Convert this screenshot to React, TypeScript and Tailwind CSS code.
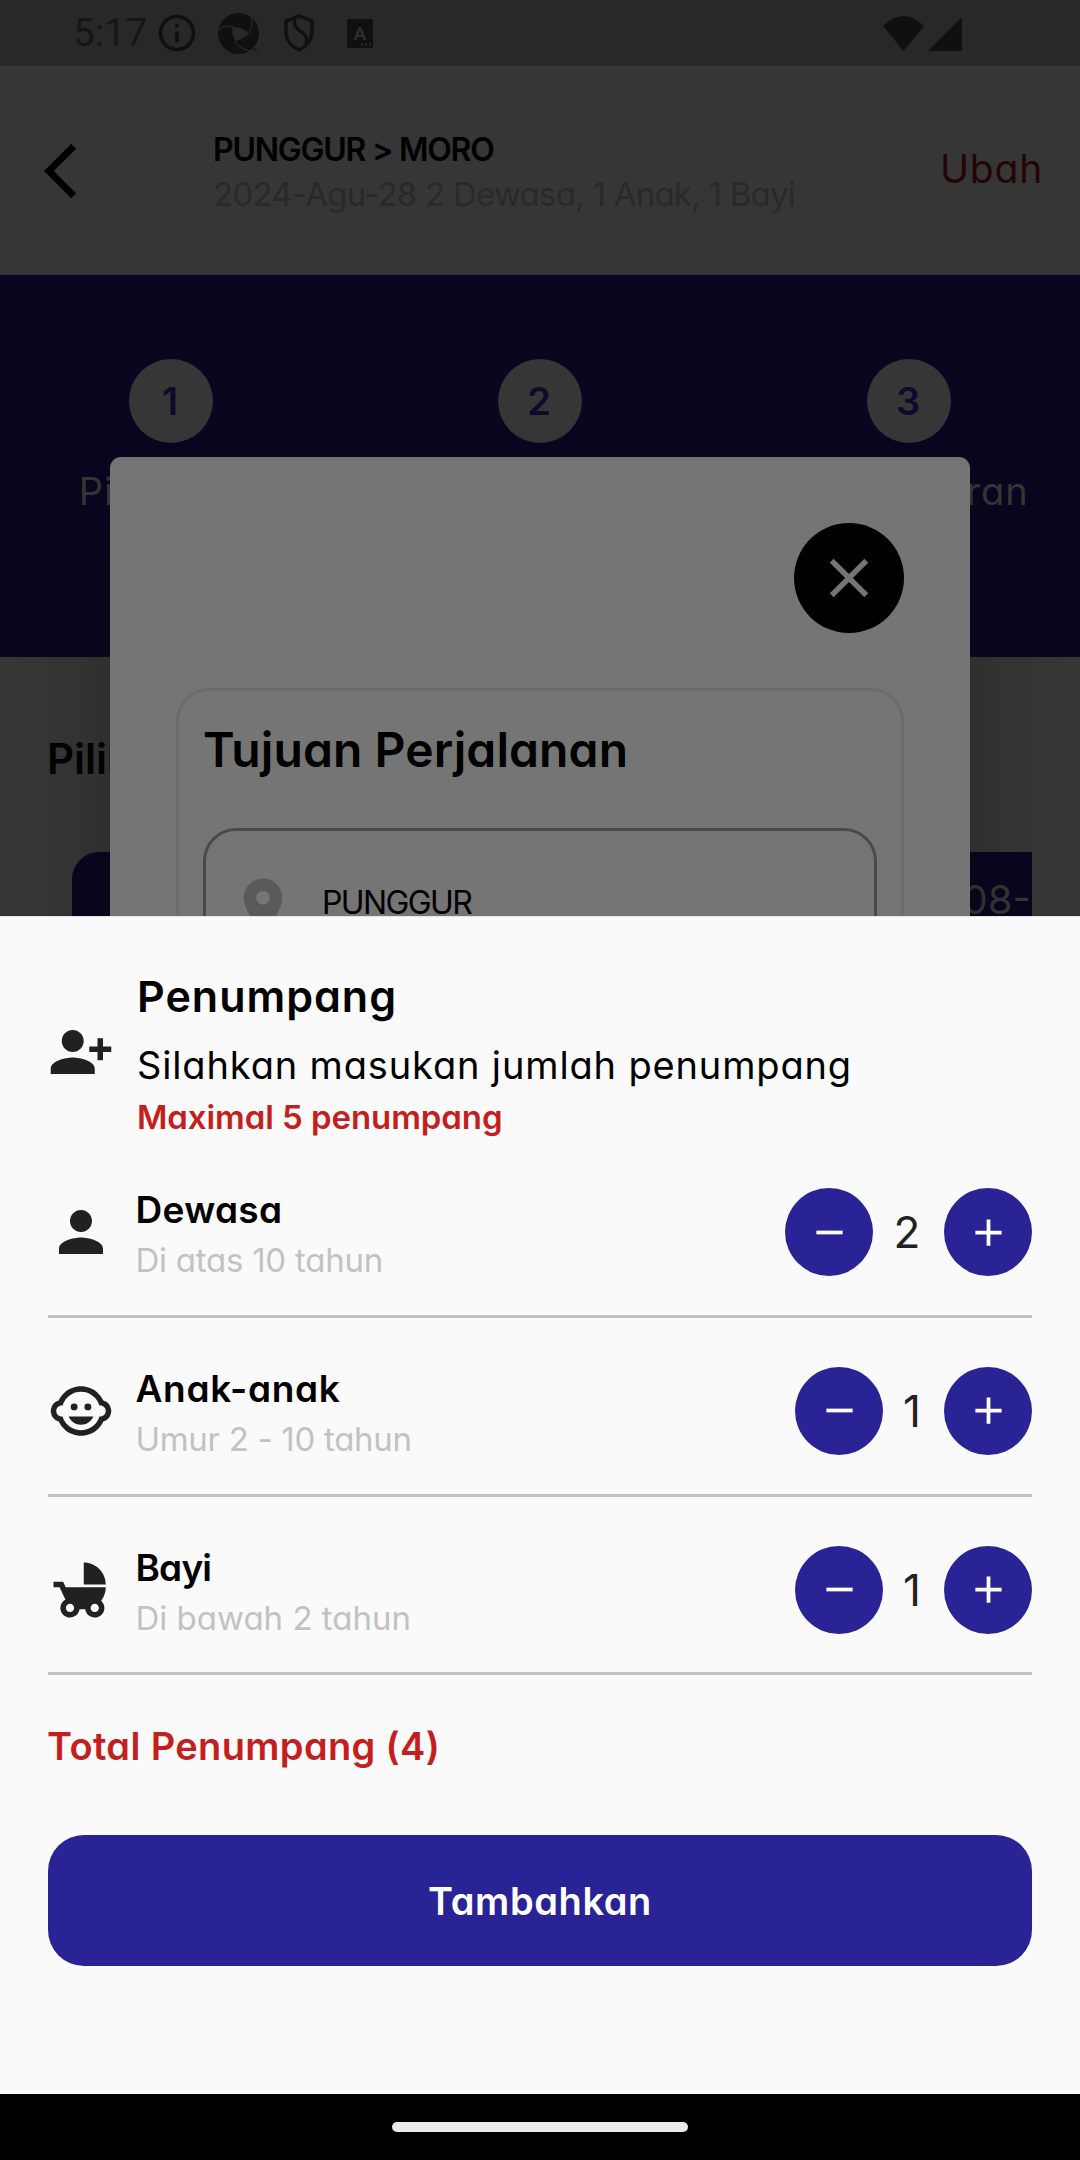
import type { ReactNode } from "react";
import {
  MdAdd,
  MdArrowBackIos,
  MdChildFriendly,
  MdClose,
  MdInfoOutline,
  MdLocationOn,
  MdOutlineChildCare,
  MdPerson,
  MdPersonAddAlt1,
  MdRemove,
} from "react-icons/md";

function ApertureIcon() {
  return (
    <svg viewBox="0 0 44 44" className="h-[44px] w-[44px]">
      <circle cx="21.5" cy="22.5" r="20.5" fill="#101010" />
      <path d="M15.5 16 Q24 15 32 22.500 Q27 28 18.5 30 Q14.500 23 15.500 16 Z" fill="#282828" />
      <path d="M1 19.500 Q7 14 16 15.500 M32.500 22 Q36 15 34 5 M17.500 30 Q22 38 33 40" fill="none" stroke="#282828" strokeWidth="1.300" />
      <path d="M36 38.500 h4" stroke="#101010" strokeWidth="1.500" />
    </svg>
  );
}

function ShieldIcon() {
  return (
    <svg viewBox="0 0 32 40" className="h-[40px] w-[32px]" fill="none" stroke="#101010" strokeWidth="3.400" strokeLinejoin="round">
      <path d="M16 3 L29 8 V19 C29 27 23.500 33.500 16 37 C8.500 33.500 3 27 3 19 V8 Z" />
      <path d="M11.500 5 V10 C11.500 18 23.500 18.500 23.500 26 V31" />
    </svg>
  );
}

function LetterTileIcon() {
  return (
    <svg viewBox="0 0 26 29" className="h-[29px] w-[26px]">
      <rect width="26" height="29" rx="2.500" fill="#101010" />
      <text x="13" y="20.500" textAnchor="middle" fontFamily="Roboto" fontWeight="700" fontSize="19" fill="#2d2d2d">
        A
      </text>
      <path d="M14 25.500h2M18 25.500h2M22 25.500h2" stroke="#2d2d2d" strokeWidth="2" />
    </svg>
  );
}

function StatusBar() {
  return (
    <div className="flex h-[66px] items-center bg-[#282828] pr-[118px] pl-[73px]">
      <span className="w-[82px] font-[Roboto] text-[38.500px] leading-[46px] whitespace-nowrap text-[#161616]">5:17</span>
      <MdInfoOutline className="h-[44px] w-[44px] text-[#101010]" />
      <span className="ml-[18px]"><ApertureIcon /></span>
      <span className="ml-[22px]"><ShieldIcon /></span>
      <span className="ml-[32px]"><LetterTileIcon /></span>
      <div className="ml-auto flex items-end gap-[4px]">
        <svg viewBox="0 0 41 35" className="h-[35px] w-[41px]">
          <path d="M0 10 Q20.500 -10 41 10 L20.500 35 Z" fill="#101010" />
        </svg>
        <svg viewBox="0 0 34 34" className="h-[34px] w-[34px]">
          <path d="M34 0 V34 H0 Z" fill="#101010" />
        </svg>
      </div>
    </div>
  );
}

function Header() {
  return (
    <div className="flex h-[209px] items-center bg-[#363636] pr-[37px] pl-[44px]">
      <MdArrowBackIos className="h-[66px] w-[66px] text-black" />
      <div className="mt-[2px] ml-[103px] leading-[45px] whitespace-nowrap">
        <div className="text-[32px] font-semibold tracking-[-1.25px] text-black">PUNGGUR &gt; MORO</div>
        <div className="text-[33px] tracking-[-0.75px] text-[#292929]">2024-Agu-28 2 Dewasa, 1 Anak, 1 Bayi</div>
      </div>
      <div className="mb-[4px] ml-auto text-[39px] leading-[46px] tracking-[0.8px] text-[#240404]">Ubah</div>
    </div>
  );
}

const steps = ["Pilih Tiket", "Data Diri", "Pembayaran"];

function Steps() {
  return (
    <div className="flex h-[382px] justify-between bg-[#09071f] px-[50px] pt-[84px]">
      {steps.map((label, i) => (
        <div key={label} className="flex w-[242px] flex-col items-center">
          <div className="flex h-[84px] w-[84px] items-center justify-center rounded-full bg-[#363636] pr-[2px] text-[38px] font-semibold text-[#0d0a2d]">
            {i + 1}
          </div>
          <div className="mt-[25px] text-[38px] leading-[46px] tracking-[1px] whitespace-nowrap text-[#363636]">{label}</div>
        </div>
      ))}
    </div>
  );
}

function BookingPage() {
  return (
    <div>
      <StatusBar />
      <Header />
      <Steps />
      <div className="pr-[48px] pl-[47px]">
        <div className="mt-[77px] text-[42px] leading-[50px] font-semibold text-black">Pilih</div>
        <div className="mt-[68px] ml-[25px] flex h-[140px] justify-end rounded-tl-[27px] bg-[#09071f] pt-[24px] pr-[1px] text-[40px] leading-[48px] text-[#363636]">
          08-
        </div>
      </div>
    </div>
  );
}

function TripDialog() {
  return (
    <div className="absolute top-[457px] left-[110px] flex h-[600px] w-[860px] flex-col rounded-[11px] bg-[#757575] p-[66px] shadow-[0_66px_84px_8px_rgba(0,0,0,0.22)]">
      <button className="flex h-[110px] w-[110px] shrink-0 items-center justify-center self-end rounded-full bg-black">
        <MdClose className="h-[66px] w-[66px] text-[#757575]" />
      </button>
      <div className="mt-[55px] h-[400px] shrink-0 rounded-t-[33px] border-[3px] border-[#6c6c6c] px-[24px] pt-[30px]">
        <h2 className="text-[48px] leading-[58px] font-semibold tracking-[0.1px] whitespace-nowrap text-black">Tujuan Perjalanan</h2>
        <div className="mt-[49px] flex h-[150px] items-start rounded-[33px] border-[3px] border-[#4a4a4a] pt-[42px] pl-[24px]">
          <MdLocationOn className="h-[66px] w-[66px] text-[#5a5a5a]" />
          <span className="mt-[10px] ml-[26px] text-[32px] leading-[40px] tracking-[-1.6px] text-black">PUNGGUR</span>
        </div>
      </div>
    </div>
  );
}

type Passenger = {
  name: string;
  nameClass: string;
  age: string;
  ageClass: string;
  count: number;
  icon: ReactNode;
};

const passengers: Passenger[] = [
  {
    name: "Dewasa",
    nameClass: "tracking-[0.3px]",
    age: "Di atas 10 tahun",
    ageClass: "tracking-[-0.25px]",
    count: 2,
    icon: <MdPerson className="h-[66px] w-[66px]" />,
  },
  {
    name: "Anak-anak",
    nameClass: "tracking-[0.7px]",
    age: "Umur 2 - 10 tahun",
    ageClass: "tracking-[-0.3px]",
    count: 1,
    icon: <MdOutlineChildCare className="h-[66px] w-[66px]" />,
  },
  {
    name: "Bayi",
    nameClass: "tracking-[-0.8px]",
    age: "Di bawah 2 tahun",
    ageClass: "tracking-[0px]",
    count: 1,
    icon: <MdChildFriendly className="h-[66px] w-[66px]" />,
  },
];

function RoundButton({ children }: { children: ReactNode }) {
  return (
    <button className="flex h-[88px] w-[88px] items-center justify-center rounded-full bg-[#2a2396] text-white">{children}</button>
  );
}

function PassengerRow({ name, nameClass, age, ageClass, count, icon }: Passenger) {
  return (
    <div className="flex h-[178.75px] items-start border-b-[3px] border-[#c2c2c2] pt-[48px]">
      <div className="mt-[12px] text-[#212121]">{icon}</div>
      <div className="ml-[21.500px] whitespace-nowrap">
        <div className={`text-[37px] leading-[46px] font-semibold text-black ${nameClass}`}>{name}</div>
        <div className={`mt-[7px] text-[33px] leading-[40px] text-[#c2c2c2] ${ageClass}`}>{age}</div>
      </div>
      <div className="mt-[1px] ml-auto flex items-center">
        <RoundButton>
          <MdRemove className="h-[45px] w-[45px]" />
        </RoundButton>
        <span className={`pr-[3px] text-center text-[44px] leading-[54px] text-[#212121] ${count === 1 ? "w-[61px]" : "w-[71px]"}`}>{count}</span>
        <RoundButton>
          <MdAdd className="h-[45px] w-[45px]" />
        </RoundButton>
      </div>
    </div>
  );
}

function PassengerSheet() {
  return (
    <div className="absolute top-[916px] left-0 flex h-[1178px] w-full flex-col border-t border-[#e4e4e4] bg-[#fafafa] px-[48px] pt-[54px]">
      <div className="flex items-center whitespace-nowrap">
        <MdPersonAddAlt1 className="mb-[4px] h-[66px] w-[66px] text-[#212121]" />
        <div className="ml-[23px]">
          <div className="text-[43px] leading-[51px] font-semibold tracking-[1px] text-black">Penumpang</div>
          <div className="mt-[20px] text-[38px] leading-[46px] tracking-[0.85px] text-black">Silahkan masukan jumlah penumpang</div>
          <div className="mt-[9px] text-[33px] leading-[40px] font-semibold tracking-[-0.08px] text-[#c41f1f]">Maximal 5 penumpang</div>
        </div>
      </div>
      <div className="mt-[2px]">
        {passengers.map((p) => (
          <PassengerRow key={p.name} {...p} />
        ))}
      </div>
      <div className="mt-[48px] -ml-[1px] text-[38px] leading-[46px] font-semibold tracking-[0.35px] text-[#c41f1f]">Total Penumpang (4)</div>
      <button className="mt-[66px] h-[131px] rounded-[36px] bg-[#2a2396] pt-[1px] text-[38px] font-semibold tracking-[0.6px] text-white">Tambahkan</button>
    </div>
  );
}

export default function App() {
  return (
    <div className="relative flex h-[2160px] w-[1080px] flex-col justify-between overflow-hidden bg-[#363636] font-['Inter',sans-serif] [font-feature-settings:'cv11']">
      <BookingPage />
      <TripDialog />
      <PassengerSheet />
      <div className="flex h-[66px] items-center justify-center bg-black">
        <div className="h-[10px] w-[296px] rounded-full bg-[#ebebeb]" />
      </div>
    </div>
  );
}
